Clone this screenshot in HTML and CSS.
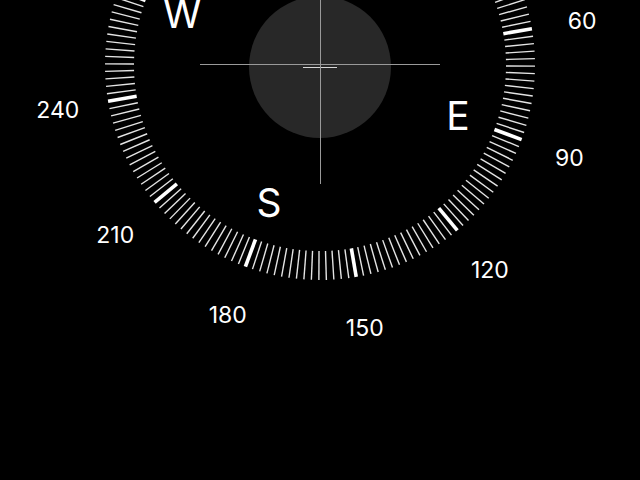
FILE: index.html
```html
<!DOCTYPE html>
<html lang="en">
<head>
    <meta charset="UTF-8">
    <meta name="viewport" content="width=device-width, initial-scale=1.0">
    <title>Compass</title>
    <link rel="stylesheet" href="styles.css">
</head>
<body>
    <div class="compass">
        <svg class="dial" viewBox="0 0 640 480" width="640" height="480">
            <!-- level bubble -->
            <circle class="bubble" cx="320" cy="67" r="71"></circle>
            <line class="bubble-mark" x1="303" y1="67.5" x2="337" y2="67.5"></line>

            <!-- crosshair -->
            <line class="cross" x1="200" y1="64.5" x2="440" y2="64.5"></line>
            <line class="cross" x1="320.5" y1="0" x2="320.5" y2="184"></line>

            <!-- ring of ticks, filled in by the script below -->
            <g id="ticks" transform="translate(320 65) rotate(20.3)"></g>

            <!-- cardinal letters and degree numbers -->
            <g id="labels"></g>
        </svg>
    </div>

    <script>
        var ns = 'http://www.w3.org/2000/svg';
        var cx = 320, cy = 65, turn = 20.3;

        var ticks = document.getElementById('ticks');
        for (var d = 0; d < 360; d += 2) {
            var line = document.createElementNS(ns, 'line');
            line.setAttribute('x1', 0);
            line.setAttribute('y1', -186);
            line.setAttribute('x2', 0);
            line.setAttribute('y2', -215);
            line.setAttribute('transform', 'rotate(' + d + ')');
            line.setAttribute('class', d % 30 === 0 ? 'tick major' : 'tick');
            ticks.appendChild(line);
        }

        var labels = document.getElementById('labels');
        function addLabel(text, deg, r, cls, drop) {
            var a = (deg + turn) * Math.PI / 180;
            var y = cy - r * Math.cos(a);
            if (y < 0) return; // rotated off the top of the screen
            var t = document.createElementNS(ns, 'text');
            t.setAttribute('x', (cx + r * Math.sin(a)).toFixed(1));
            t.setAttribute('y', (y + drop).toFixed(1));
            t.setAttribute('class', cls);
            t.textContent = text;
            labels.appendChild(t);
        }

        ['N', 'E', 'S', 'W'].forEach(function (c, i) {
            addLabel(c, i * 90, 147, 'cardinal', 14);
        });
        for (var n = 0; n < 360; n += 30) {
            addLabel(String(n), n, 266, 'degree', 8.5);
        }
    </script>
</body>
</html>
```

FILE: styles.css
```css
* {
    margin: 0px;
    padding: 0px;
}

html, body {
    width: 100%;
    height: 100%;
    background: #000;
    overflow: hidden;
}

.compass {
    width: 640px;
    height: 480px;
}

.dial {
    display: block;
}

.bubble {
    fill: #282828;
}

.bubble-mark {
    stroke: #d8d8d8;
    stroke-width: 1;
}

.cross {
    stroke: #9a9a9a;
    stroke-width: 1;
}

.tick {
    stroke: #e4e4e4;
    stroke-width: 1.4;
}

.tick.major {
    stroke: #fff;
    stroke-width: 3.6;
}

.cardinal {
    fill: #fff;
    font-family: Inter, "Liberation Sans", sans-serif;
    font-size: 39px;
    font-weight: 400;
    text-anchor: middle;
}

.degree {
    fill: #fff;
    font-family: Inter, "Liberation Sans", sans-serif;
    font-size: 23px;
    font-weight: 400;
    text-anchor: middle;
}
```
